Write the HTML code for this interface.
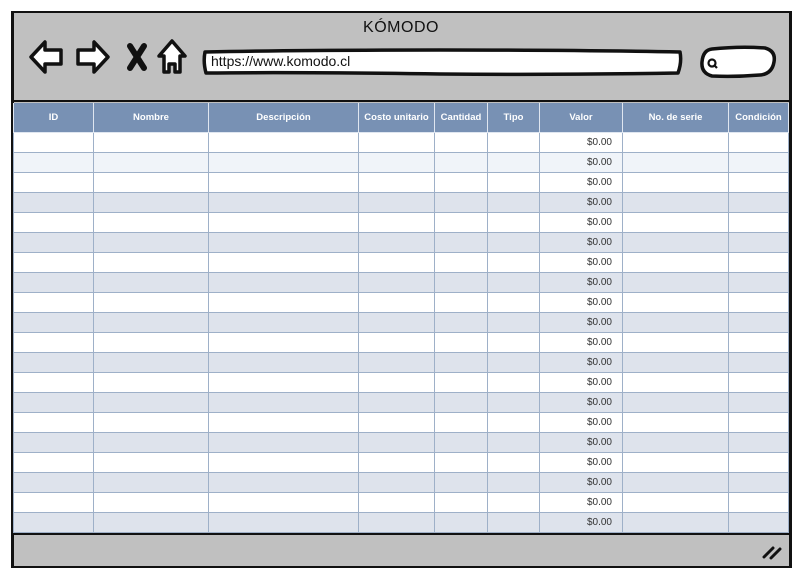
<!DOCTYPE html>
<html><head><meta charset="utf-8"><style>
body{margin:0;width:802px;height:578px;background:#fff;position:relative;overflow:hidden;font-family:"Liberation Sans",Arial,sans-serif}
.a{position:absolute}
#frame{left:11px;top:11px;width:775px;height:553px;border:2px solid #111;border-left-width:3px;border-right-width:3px;background:#c0c0c0;}
table{border-collapse:collapse;position:absolute;left:13px;top:103px;table-layout:fixed}
td,th{border:1px solid #9eb0c8;padding:0;font-size:9.5px;height:19px;overflow:hidden;white-space:nowrap}
th{background:#7891b4;color:#fff;font-weight:bold;height:29px;border-color:#dfe6f0;border-top:none}
td{color:#333;font-size:10px}
tr.w td{background:#fff}
tr.l td{background:#f0f4f9}
tr.d td{background:#dee3ec}
td.v{text-align:right;padding-right:10px}
</style></head><body>
<div id="frame" class="a"></div>
<div class="a" style="left:14px;top:100px;width:775px;height:2px;background:#111"></div>
<div class="a" style="left:0;top:19px;width:802px;text-align:center;font-size:16px;color:#111;letter-spacing:0.5px">KÓMODO</div>
<svg class="a" style="left:0;top:0" width="802" height="100">
<g fill="#fff" stroke="#111" stroke-width="3.5" stroke-linejoin="round">
<path d="M31 57 L45 42 L45 50 L61 50 L61 64 L45 64 L45 72 Z"/>
<path d="M108 57 L94 42 L94 50 L78 50 L78 64 L94 64 L94 72 Z"/>
<path d="M172 41 L185 56 L180 56 L180 72 L175 72 L175 64 L169 64 L169 72 L164 72 L164 56 L159 56 Z"/>
<path d="M205 52 Q300 50 440 50 Q580 50 680 52 Q682 62 678 73 Q560 75 440 74 Q300 72 206 73 Q203 62 205 52 Z"/>
<path d="M712 49 Q740 46 765 48 Q776 51 774 62 Q772 74 760 75 Q735 77 712 76 Q701 73 702 62 Q703 50 712 49 Z"/>
</g>
<path d="M130 46 L144 68 M144 46 L130 68" stroke="#111" stroke-width="6" stroke-linecap="round"/>
<circle cx="712" cy="63" r="3.5" fill="none" stroke="#111" stroke-width="2.2"/>
<path d="M714 65 L717 68" stroke="#111" stroke-width="2.2"/>
</svg>
<div class="a" style="left:211px;top:53px;font-size:14px;color:#111">https://www.komodo.cl</div>
<table>
<colgroup><col style="width:80px"><col style="width:115px"><col style="width:150px"><col style="width:76px"><col style="width:53px"><col style="width:52px"><col style="width:83px"><col style="width:106px"><col style="width:60px"></colgroup>
<tr><th>ID</th><th>Nombre</th><th>Descripción</th><th>Costo unitario</th><th>Cantidad</th><th>Tipo</th><th>Valor</th><th>No. de serie</th><th>Condición</th></tr>
<tr class="w"><td></td><td></td><td></td><td></td><td></td><td></td><td class="v">$0.00</td><td></td><td></td></tr>
<tr class="l"><td></td><td></td><td></td><td></td><td></td><td></td><td class="v">$0.00</td><td></td><td></td></tr>
<tr class="w"><td></td><td></td><td></td><td></td><td></td><td></td><td class="v">$0.00</td><td></td><td></td></tr>
<tr class="d"><td></td><td></td><td></td><td></td><td></td><td></td><td class="v">$0.00</td><td></td><td></td></tr>
<tr class="w"><td></td><td></td><td></td><td></td><td></td><td></td><td class="v">$0.00</td><td></td><td></td></tr>
<tr class="d"><td></td><td></td><td></td><td></td><td></td><td></td><td class="v">$0.00</td><td></td><td></td></tr>
<tr class="w"><td></td><td></td><td></td><td></td><td></td><td></td><td class="v">$0.00</td><td></td><td></td></tr>
<tr class="d"><td></td><td></td><td></td><td></td><td></td><td></td><td class="v">$0.00</td><td></td><td></td></tr>
<tr class="w"><td></td><td></td><td></td><td></td><td></td><td></td><td class="v">$0.00</td><td></td><td></td></tr>
<tr class="d"><td></td><td></td><td></td><td></td><td></td><td></td><td class="v">$0.00</td><td></td><td></td></tr>
<tr class="w"><td></td><td></td><td></td><td></td><td></td><td></td><td class="v">$0.00</td><td></td><td></td></tr>
<tr class="d"><td></td><td></td><td></td><td></td><td></td><td></td><td class="v">$0.00</td><td></td><td></td></tr>
<tr class="w"><td></td><td></td><td></td><td></td><td></td><td></td><td class="v">$0.00</td><td></td><td></td></tr>
<tr class="d"><td></td><td></td><td></td><td></td><td></td><td></td><td class="v">$0.00</td><td></td><td></td></tr>
<tr class="w"><td></td><td></td><td></td><td></td><td></td><td></td><td class="v">$0.00</td><td></td><td></td></tr>
<tr class="d"><td></td><td></td><td></td><td></td><td></td><td></td><td class="v">$0.00</td><td></td><td></td></tr>
<tr class="w"><td></td><td></td><td></td><td></td><td></td><td></td><td class="v">$0.00</td><td></td><td></td></tr>
<tr class="d"><td></td><td></td><td></td><td></td><td></td><td></td><td class="v">$0.00</td><td></td><td></td></tr>
<tr class="w"><td></td><td></td><td></td><td></td><td></td><td></td><td class="v">$0.00</td><td></td><td></td></tr>
<tr class="d"><td></td><td></td><td></td><td></td><td></td><td></td><td class="v">$0.00</td><td></td><td></td></tr>
</table>
<div class="a" style="left:14px;top:533px;width:775px;height:2px;background:#111"></div>
<svg class="a" style="left:760px;top:543px" width="24" height="18"><path d="M4 14 L13 5 M11 15 L20 6" stroke="#111" stroke-width="3" stroke-linecap="round"/></svg>
</body></html>
